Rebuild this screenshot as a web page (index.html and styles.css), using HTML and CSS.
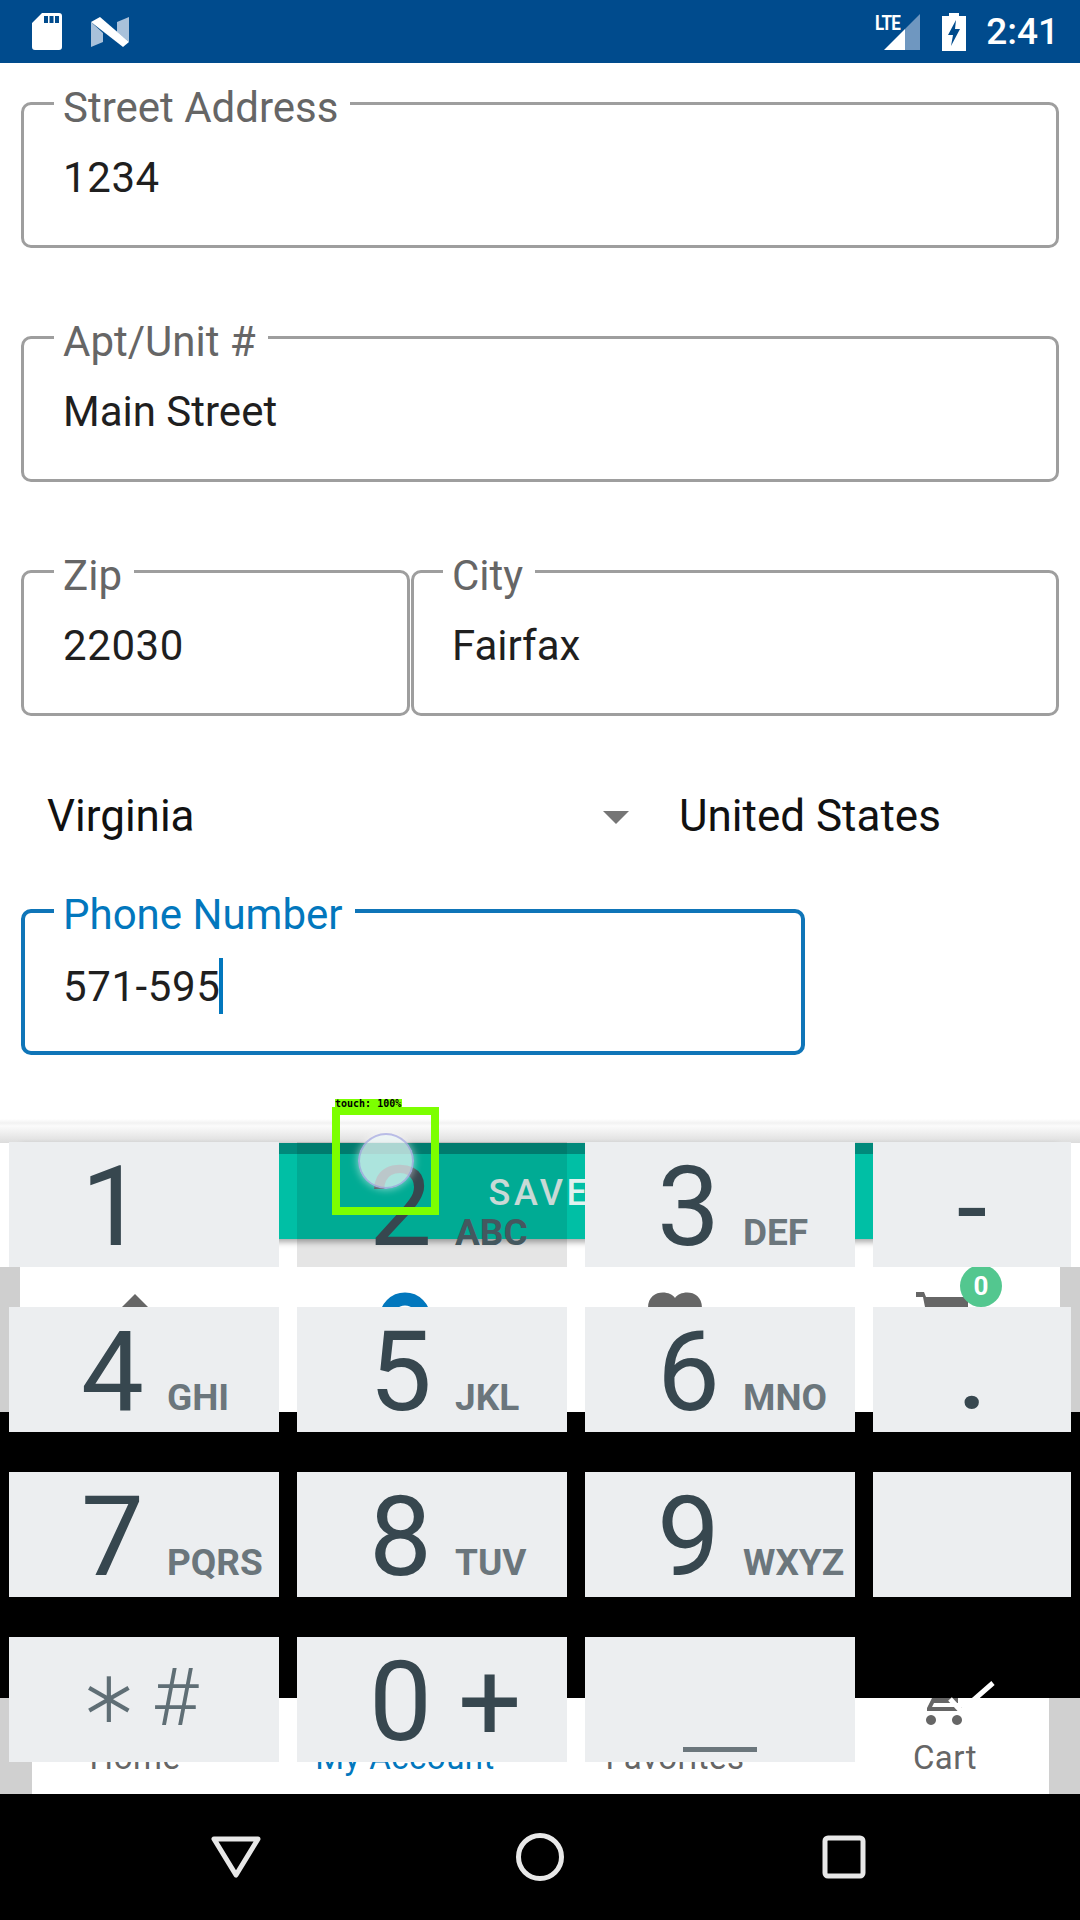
FILE: index.html
```html
<!DOCTYPE html>
<html lang="en">
<head>
<meta charset="utf-8">
<title>Address form</title>
<link rel="stylesheet" href="styles.css">
</head>
<body>
<div class="screen">
  <header class="status">
    <div class="status-group">
      <svg class="ic-sd" viewBox="0 0 30 37"><path fill="#fff" fill-rule="evenodd" d="M10 0H27a3 3 0 0 1 3 3V34a3 3 0 0 1-3 3H3a3 3 0 0 1-3-3V10ZM12 3V10H16V3ZM17.500 3V10H21.500V3ZM23 3V10H27V3Z"/></svg>
      <svg class="ic-n" viewBox="0 0 38 31"><path fill="#a9c1da" d="M0 6 12 17V26L0 31ZM26 6 38 1V26L26 16Z"/><path fill="#fff" d="M0 6 9 1 38 26 32 31Z"/></svg>
    </div>
    <div class="status-group status-right">
      <div class="signal">
        <span class="lte">LTE</span>
        <svg class="ic-signal" viewBox="0 0 36 36"><path fill="#6f97c0" d="M36 0V36H21V15Z"/><path fill="#fff" d="M21 15V36H0Z"/></svg>
      </div>
      <svg class="ic-batt" viewBox="0 0 24 38"><path fill="#fff" fill-rule="evenodd" d="M7 0H17V3H24V38H0V3H7ZM14 7 6 22H11L9 33 18 16H13Z"/></svg>
      <span class="clock">2:41</span>
    </div>
  </header>

  <main class="form">
    <div class="field"><span class="field-label">Street Address</span><span class="field-value field-num">1234</span></div>
    <div class="field"><span class="field-label">Apt/Unit #</span><span class="field-value">Main Street</span></div>
    <div class="field-row">
      <div class="field field-zip"><span class="field-label">Zip</span><span class="field-value field-num">22030</span></div>
      <div class="field field-city"><span class="field-label">City</span><span class="field-value">Fairfax</span></div>
    </div>
    <div class="selects">
      <div class="select-state"><span>Virginia</span><i class="caret"></i></div>
      <div class="select-country">United States</div>
    </div>
    <div class="field field-phone"><span class="field-label">Phone Number</span><span class="field-value field-num">571-595<i class="cursor"></i></span></div>
  </main>

  <section class="save-area">
    <div class="save-btn"><span>SAVE</span></div>
  </section>

  <nav class="tabs tabs-top">
    <div class="tab"><svg class="tab-ic" viewBox="0 0 48 40"><path fill="#666" d="M24 2 48 26V40H0V26Z"/></svg></div>
    <div class="tab"><svg class="tab-ic ic-account" viewBox="0 0 48 40"><circle cx="24" cy="26" r="19" fill="none" stroke="#0277bd" stroke-width="13"/></svg></div>
    <div class="tab"><svg class="tab-ic ic-heart" viewBox="0 0 54 40"><path fill="#666" d="M27 6C22-2 0-3 0 16V40H54V16C54-3 32-2 27 6Z"/></svg></div>
    <div class="tab tab-cart">
      <svg class="tab-ic ic-cart-top" viewBox="0 0 56 40"><path fill="#666" d="M0 0H8L10 5H52V40H14L7 5H0Z"/></svg>
      <span class="badge">0</span>
    </div>
  </nav>

  <div class="gap-black"></div>

  <nav class="tabs tabs-bottom">
    <div class="tab-label">Home</div>
    <div class="tab-label tab-label-active">My Account</div>
    <div class="tab-label">Favorites</div>
    <div class="tab-label tab-label-cart">
      <svg class="ic-cart-bottom" viewBox="0 0 40 29"><path fill="#666" d="M7 0H33V5H9L7 9H38V13H2V10ZM6 17a5 5 0 1 0 .01 0ZM32 17a5 5 0 1 0 .01 0Z"/></svg>
      <span>Cart</span>
    </div>
  </nav>

  <footer class="sysnav">
    <svg class="ic-back" viewBox="0 0 56 48"><path d="M6 6H50L28 42Z" fill="none" stroke="#e8e8e8" stroke-width="5" stroke-linejoin="round"/></svg>
    <svg class="ic-home" viewBox="0 0 50 50"><circle cx="25" cy="25" r="21.500" fill="none" stroke="#e8e8e8" stroke-width="5"/></svg>
    <svg class="ic-recent" viewBox="0 0 44 44"><rect x="3" y="3" width="38" height="38" rx="3" fill="none" stroke="#e8e8e8" stroke-width="5"/></svg>
  </footer>

  <div class="keyboard">
    <div class="key"><span class="digit">1</span></div>
    <div class="key key-pressed"><span class="digit">2</span><span class="letters">ABC</span></div>
    <div class="key"><span class="digit">3</span><span class="letters">DEF</span></div>
    <div class="key key-side"><span class="sym-dash">-</span></div>
    <div class="key"><span class="digit">4</span><span class="letters">GHI</span></div>
    <div class="key"><span class="digit">5</span><span class="letters">JKL</span></div>
    <div class="key"><span class="digit">6</span><span class="letters">MNO</span></div>
    <div class="key key-side"><span class="sym-dot">.</span></div>
    <div class="key"><span class="digit">7</span><span class="letters">PQRS</span></div>
    <div class="key"><span class="digit">8</span><span class="letters">TUV</span></div>
    <div class="key"><span class="digit">9</span><span class="letters">WXYZ</span></div>
    <div class="key key-side"></div>
    <div class="key key-symbols"><span class="sym-star">∗</span><span class="sym-hash">#</span></div>
    <div class="key"><span class="digit">0</span><span class="sym-plus">+</span></div>
    <div class="key key-space"><i class="space-bar"></i></div>
    <div class="key-done"><svg class="ic-done" viewBox="0 0 50 40"><path d="M48 2 16 30 5 18" fill="none" stroke="#fff" stroke-width="5"/></svg></div>
  </div>

  <div class="touch">
    <span class="touch-tag">touch: 100%</span>
    <i class="touch-dot"></i>
  </div>
</div>
</body>
</html>
```

FILE: styles.css
```css
* { box-sizing: border-box; }
html, body { margin: 0; padding: 0; background: #000; }
body { width: 1080px; height: 1920px; overflow: hidden; font-family: Roboto, "Noto Sans", sans-serif; }

.screen { position: relative; width: 1080px; height: 1920px; display: flex; flex-direction: column; background: #fff; overflow: hidden; }

/* status bar */
.status { height: 63px; flex: none; background: #004b8d; display: flex; justify-content: space-between; align-items: center; padding: 0 21px 0 32px; color: #fff; }
.status-group { display: flex; align-items: center; gap: 29px; }
.status-right { gap: 0; }
.ic-sd { width: 30px; height: 37px; }
.ic-n { width: 38px; height: 31px; }
.signal { position: relative; width: 45px; height: 36px; margin-right: 22px; display: flex; justify-content: flex-end; }
.lte { position: absolute; left: 0; top: 1px; font-size: 20px; font-weight: 700; line-height: 17px; letter-spacing: -1px; transform: scaleX(.85); transform-origin: left; }
.ic-signal { width: 36px; height: 36px; }
.ic-batt { width: 24px; height: 38px; margin-right: 20px; }
.clock { font-size: 37px; font-weight: 500; line-height: 44px; }

/* form */
.form { flex: none; padding: 39px 21px 0 21px; display: flex; flex-direction: column; }
.field { position: relative; height: 146px; border: 3px solid #9e9e9e; border-radius: 10px; margin-bottom: 88px; padding: 47px 0 0 39px; }
.field-label { position: absolute; left: 30px; top: -21px; padding: 0 12px 0 9px; background: #fff; font-size: 42px; line-height: 48px; color: #666; }
.field-value { display: block; font-size: 42px; line-height: 52px; color: #1f1f1f; }
.field-num { letter-spacing: .6px; }
.field-row { display: flex; gap: 1px; }
.field-zip { width: 389px; }
.field-city { flex: 1; padding-left: 38px; }
.field-city .field-label { left: 29px; }
.field-row .field { margin-bottom: 47px; }
.selects { display: flex; align-items: center; height: 106px; margin-bottom: 40px; font-size: 44px; color: #111; }
.select-state { width: 659px; display: flex; justify-content: space-between; align-items: center; padding: 0 51px 0 26px; }
.caret { width: 0; height: 0; border-left: 13px solid transparent; border-right: 13px solid transparent; border-top: 13px solid #757575; margin-top: 2px; }
.select-country { margin-left: -1px; }
.field-phone { width: 784px; border: 4px solid #0f75b8; margin-bottom: 0; padding-left: 38px; padding-top: 45px; }
.field-phone .field-label { color: #0277bd; left: 29px; top: -22px; }
.cursor { display: inline-block; width: 3.500px; height: 56px; background: #0277bd; vertical-align: -13px; margin-left: -1px; }

/* save button peeking out behind the keypad */
.save-area { flex: none; height: 212px; padding: 88px 22px 0 21px; background: linear-gradient(to bottom, #fff 0, #fff 64px, #f2f2f2 68px, #fbfbfb 71px, #dcdcdc 88px, #fff 88px); }
.save-btn { height: 96px; background: #00bfa5; border-top: 11px solid #00897b; display: flex; justify-content: center; align-items: center; box-shadow: 0 3px 6px rgba(0,0,0,.35); }
.save-btn span { font-size: 36px; font-weight: 500; letter-spacing: 3.500px; color: #e0f2ef; padding-bottom: 7px; }

/* bottom tabs, seen in two slices */
.tabs { flex: none; width: 1080px; display: grid; grid-template-columns: repeat(4, 270px); }
.tabs-top { height: 145px; padding-top: 25px; background: linear-gradient(to right, #cfcfcf 20px, #fff 20px, #fff 1060px, #cfcfcf 1060px); }
.tab { position: relative; display: flex; justify-content: center; align-items: flex-start; }
.tab-ic { width: 48px; height: 40px; }
.ic-account { overflow: visible; }
.ic-heart { width: 54px; }
.tab-cart { justify-content: flex-start; padding-left: 106px; }
.ic-cart-top { width: 56px; }
.badge { position: absolute; left: 150px; top: -27px; width: 42px; height: 42px; border-radius: 50%; background: #53c78f; color: #fff; font-size: 26px; font-weight: 700; line-height: 42px; text-align: center; }
.gap-black { flex: none; height: 286px; background: #000; }
.tabs-bottom { height: 96px; align-items: end; padding-bottom: 17px; background: linear-gradient(to right, #d0d0d0 32px, #fff 32px, #fff 1049px, #d0d0d0 1049px); }
.tab-label { text-align: center; font-size: 33px; line-height: 38px; color: #666; letter-spacing: .5px; }
.tab-label-active { color: #0277bd; }
.tab-label-cart { display: flex; flex-direction: column; align-items: center; gap: 12px; }
.ic-cart-bottom { width: 40px; height: 29px; }

/* system nav */
.sysnav { flex: none; height: 126px; background: #000; display: grid; grid-template-columns: repeat(3, 304px); justify-content: center; justify-items: center; align-items: center; }
.ic-back { width: 56px; height: 48px; }
.ic-home { width: 50px; height: 50px; }
.ic-recent { width: 44px; height: 44px; }

/* keypad overlay */
.keyboard { position: absolute; left: 9px; top: 1142px; display: grid; grid-template-columns: 270px 270px 270px 198px; grid-template-rows: repeat(4, 125px); column-gap: 18px; row-gap: 40px; }
.key { background: #eceef0; display: flex; align-items: baseline; padding: 2px 0 0 72px; height: 125px; color: #37474f; line-height: 1; }
.key-pressed { background: rgba(0,0,0,.1); }
.digit { width: 63px; font-size: 112px; font-weight: 400; line-height: 125px; flex: none; }
.letters { margin-left: 23px; font-size: 37px; font-weight: 700; color: #6b767c; }
.key-pressed .letters { color: #44585f; }
.key-side { padding: 0; justify-content: center; align-items: flex-start; }
.sym-dash { font-size: 110px; line-height: 131px; }
.sym-dot { font-size: 90px; font-weight: 700; line-height: 144px; }
.key-symbols { padding-left: 68px; color: #5f6e75; align-items: flex-start; }
.sym-star { font-family: "DejaVu Sans", sans-serif; font-size: 76px; line-height: 115px; -webkit-text-stroke: 2px #eceef0; }
.sym-hash { font-size: 80px; font-weight: 300; line-height: 119px; margin-left: 11px; }
.sym-plus { margin-left: 26px; font-size: 112px; font-weight: 400; }
.key-space { position: relative; padding: 0; }
.space-bar { position: absolute; left: 98px; top: 110px; width: 74px; height: 5px; background: #6b767c; }
.key-done { position: relative; }
.ic-done { position: absolute; left: 72px; top: 44px; width: 50px; height: 40px; }

/* touch annotation */
.touch { position: absolute; left: 332px; top: 1107px; width: 107px; height: 108px; border: 8px solid #7cff00; }
.touch-tag { position: absolute; left: -5px; top: -16px; width: 67px; height: 10px; background: #7cff00; color: #000; font: 700 10px/10px "DejaVu Sans Mono", monospace; white-space: nowrap; }
.touch-dot { position: absolute; left: 18px; top: 18px; width: 56px; height: 56px; border-radius: 50%; background: rgba(238,250,250,.72); border: 2px solid rgba(150,150,220,.6); box-shadow: 0 0 8px rgba(255,255,255,.6); }
```
